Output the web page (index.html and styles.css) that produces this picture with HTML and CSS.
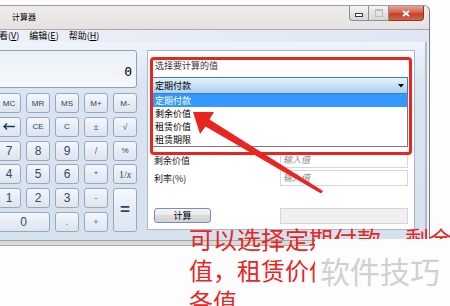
FILE: index.html
```html
<!DOCTYPE html>
<html lang="zh">
<head>
  <meta charset="UTF-8" />
  <meta name="viewport" content="width=device-width, initial-scale=1.0"/>
  <title>计算器</title>
  <link rel="stylesheet" href="styles.css">
</head>
<body>

  <div class="window">
    <div class="titlebar">
      <span class="title">计算器</span>
      <div class="controls">
        <span class="ctl min"><i></i></span>
        <span class="ctl max"><i></i></span>
        <span class="ctl close">
          <svg width="8" height="7" viewBox="0 0 8 7"><path d="M1 1 L7 6 M7 1 L1 6" stroke="#fff" stroke-width="1.8"/></svg>
        </span>
      </div>
    </div>

    <div class="menubar">
      <span>查看(<u>V</u>)</span>
      <span>编辑(<u>E</u>)</span>
      <span>帮助(<u>H</u>)</span>
    </div>

    <div class="client">
      <div class="calc">
        <div class="display">0</div>
        <div class="keys">
          <button>MC</button><button>MR</button><button>MS</button><button>M+</button><button>M-</button>
          <button>
            <svg width="12" height="7" viewBox="0 0 12 7"><path d="M1 3.5 H12 M4 0.5 L1 3.5 L4 6.5" stroke="#1e395b" stroke-width="1.4" fill="none"/></svg>
          </button>
          <button>CE</button><button>C</button><button class="op">±</button><button class="op">√</button>
          <button class="num">7</button><button class="num">8</button><button class="num">9</button><button class="op">/</button><button>%</button>
          <button class="num">4</button><button class="num">5</button><button class="num">6</button><button class="op">*</button><button class="inv">1/<i>x</i></button>
          <button class="num">1</button><button class="num">2</button><button class="num">3</button><button class="op">-</button>
          <button class="eq">=</button>
          <button class="num zero">0</button><button class="op">.</button><button class="op">+</button>
        </div>
      </div>

      <div class="panel">
        <div class="caption">选择要计算的值</div>
        <div class="combo">
          <span>定期付款</span>
          <svg width="6" height="4" viewBox="0 0 6 4"><path d="M0 0 H6 L3 3.5 Z" fill="#000"/></svg>
        </div>
        <ul class="list">
          <li class="sel">定期付款</li>
          <li>剩余价值</li>
          <li>租赁价值</li>
          <li>租赁期限</li>
        </ul>
        <div class="field">
          <label>剩余价值</label>
          <span class="input">输入值</span>
        </div>
        <div class="field">
          <label>利率(%)</label>
          <span class="input">输入值</span>
        </div>
        <div class="actions">
          <span class="btn">计算</span>
          <span class="result"></span>
        </div>
      </div>
    </div>

    <div class="frame-bottom"></div>
  </div>

  <!-- 标注 -->
  <div class="mark-box"></div>
  <svg class="arrow" width="450" height="306" viewBox="0 0 450 306">
    <polygon points="193,112 214,112 209.5,119.5 323,191 321,193.5 205.5,126.5 200,134" fill="#e8261f"/>
  </svg>
  <div class="note">
    <div>可以选择定期付款、剩余价</div>
    <div>值，租赁价值等</div>
    <div>各值</div>
  </div>
  <div class="watermark">软件技巧</div>

</body>
</html>
```

FILE: styles.css
```css
body {
  margin: 0;
  width: 450px;
  height: 306px;
  position: relative;
  overflow: hidden;
  background: #fdfdfd;
  font-family: "Noto Sans CJK SC", "Liberation Sans", sans-serif;
}

.window {
  width: 441px;
  margin-top: 5px;
  margin-left: -11px;
  box-sizing: border-box;
  border-top: 1px solid #9c9c9c;
  border-right: 1px solid #7a7a7a;
  border-radius: 0 6px 0 0;
  background: #eef2f8;
}

.titlebar {
  height: 23px;
  display: flex;
  justify-content: space-between;
  align-items: flex-start;
  background: linear-gradient(#efeceb, #e5e1e0);
  border-radius: 0 6px 0 0;
}

.title {
  margin: 5px 0 0 23px;
  font-size: 8px;
  line-height: 12px;
  color: #000;
}

.controls {
  display: flex;
  margin-right: 5px;
}

.ctl {
  height: 15px;
  box-sizing: border-box;
  border: 1px solid #8d8d8d;
  border-top: none;
  display: flex;
  align-items: center;
  justify-content: center;
  background: linear-gradient(#f6f6f6, #e4e4e4 50%, #d6d6d6);
}

.ctl.min {
  width: 19px;
  border-radius: 0 0 0 4px;
  border-right: none;
}

.ctl.min i {
  width: 6px;
  height: 2px;
  margin-top: 4px;
  border: 1px solid #3c3c3c;
  background: #fff;
}

.ctl.max {
  width: 21px;
}

.ctl.max i {
  width: 6px;
  height: 5px;
  border: 1px solid #bdbdbd;
  border-top-width: 2px;
}

.ctl.close {
  width: 35px;
  border-left: none;
  border-color: #86382c;
  border-radius: 0 0 4px 0;
  background: linear-gradient(#e6a595, #d56450 45%, #c2402b 55%, #d2654c);
}

.menubar {
  height: 12px;
  border-top: 1px solid #a9a9a9;
  display: flex;
  gap: 10px;
  padding-left: 1px;
  background: linear-gradient(to right, #eef0f7, #dfe5f3);
  font-size: 9px;
  line-height: 12px;
  color: #000;
}

.client {
  height: 198px;
  box-sizing: border-box;
  display: flex;
  gap: 10px;
  padding: 8px 0 0 8px;
  border-right: 2px solid #eef2f8;
  box-shadow: inset -2px 0 #aebbcb;
  background: linear-gradient(#eef4fb, #dbe5f1 40px, #d6e1ee);
}

.calc {
  width: 140px;
}

.display {
  height: 38px;
  box-sizing: border-box;
  border: 1px solid #8e9fb6;
  border-radius: 3px;
  background: linear-gradient(#e9f0f8, #f6f9fc);
  display: flex;
  align-items: flex-end;
  justify-content: flex-end;
  padding: 0 4px 8px 0;
  font: 13px "DejaVu Sans Mono", monospace;
  line-height: 14px;
  color: #000;
}

.keys {
  margin-top: 5px;
  display: grid;
  grid-template-columns: repeat(5, 24px);
  grid-auto-rows: 20px;
  column-gap: 5px;
  row-gap: 3.8px;
}

.keys button {
  padding: 0;
  border: 1px solid #96a7be;
  border-radius: 3px;
  background: linear-gradient(#f5f8fc, #e7edf5 50%, #dde5ef);
  font: 8px "Liberation Sans", sans-serif;
  color: #2b4467;
  display: flex;
  align-items: center;
  justify-content: center;
}

.keys button.num {
  font-size: 12px;
  color: #34486a;
}

.keys button.op {
  font-size: 9px;
  color: #52688a;
}

.keys button.inv {
  font-size: 10px;
  font-family: "Liberation Serif", serif;
}

.keys button.eq {
  grid-column: 5;
  grid-row: 5 / span 2;
  font-size: 17px;
  font-weight: bold;
}

.keys button.zero {
  grid-column: span 2;
}

.panel {
  width: 268px;
  height: 180px;
  box-sizing: border-box;
  border: 1px solid #aab6c6;
  background: #fff;
  padding: 9px 6px 0 2px;
  font-size: 9px;
  color: #1a1a1a;
}

.caption {
  line-height: 12px;
  padding-left: 5px;
  color: #333;
}

.combo {
  margin-top: 5px;
  height: 17px;
  box-sizing: border-box;
  border: 1px solid #3c7fb1;
  background: linear-gradient(#e6f2fb, #c6e1f6 50%, #a9d1f0);
  display: flex;
  align-items: center;
  justify-content: space-between;
  padding: 0 3px 0 4px;
  color: #000;
}

.list {
  list-style: none;
  margin: 0;
  padding: 0;
  border: 1px solid #7a7a7a;
  border-top: none;
  color: #000;
}

.list li {
  height: 13px;
  line-height: 13px;
  padding-left: 4px;
}

.list li.sel {
  background: #3399ff;
  color: #fff;
}

.field {
  margin-top: 5px;
  display: flex;
  align-items: center;
  justify-content: space-between;
  padding-left: 4px;
}

.field + .field {
  margin-top: 2px;
}

.input {
  width: 128px;
  height: 16px;
  box-sizing: border-box;
  border: 1px solid #d3d8de;
  padding-left: 2px;
  line-height: 14px;
  font-style: italic;
  color: #8a8a8a;
}

.actions {
  margin-top: 22px;
  display: flex;
  justify-content: space-between;
  padding-left: 4px;
}

.btn {
  width: 57px;
  height: 15px;
  box-sizing: border-box;
  border: 1px solid #7890ae;
  border-radius: 3px;
  background: linear-gradient(#f4f4f4, #ebebeb 50%, #dcdcdc 50%, #cfd3d8);
  text-align: center;
  line-height: 13px;
  color: #000;
}

.result {
  width: 128px;
  height: 16px;
  box-sizing: border-box;
  border: 1px solid #d3d3d3;
  background: #f0f0f0;
}

.frame-bottom {
  height: 4px;
  border-top: 1px solid #a4a4a4;
  border-bottom: 1px solid #ababab;
  background: #dadada;
}

.mark-box {
  position: absolute;
  left: 150px;
  top: 57px;
  width: 262px;
  height: 98px;
  box-sizing: border-box;
  border: 3px solid #e8261f;
  border-radius: 4px;
}

.arrow {
  position: absolute;
  left: 0;
  top: 0;
}

.note {
  position: absolute;
  left: 189px;
  top: 223px;
  font-size: 24px;
  line-height: 31px;
  color: #e8261f;
  white-space: nowrap;
}

.watermark {
  position: absolute;
  left: 315px;
  top: 239px;
  right: 0;
  bottom: 0;
  background: #fdfdfd;
  padding: 13px 0 0 5px;
  font-size: 30px;
  line-height: 36px;
  color: #d0d0d0;
  white-space: nowrap;
}
```
